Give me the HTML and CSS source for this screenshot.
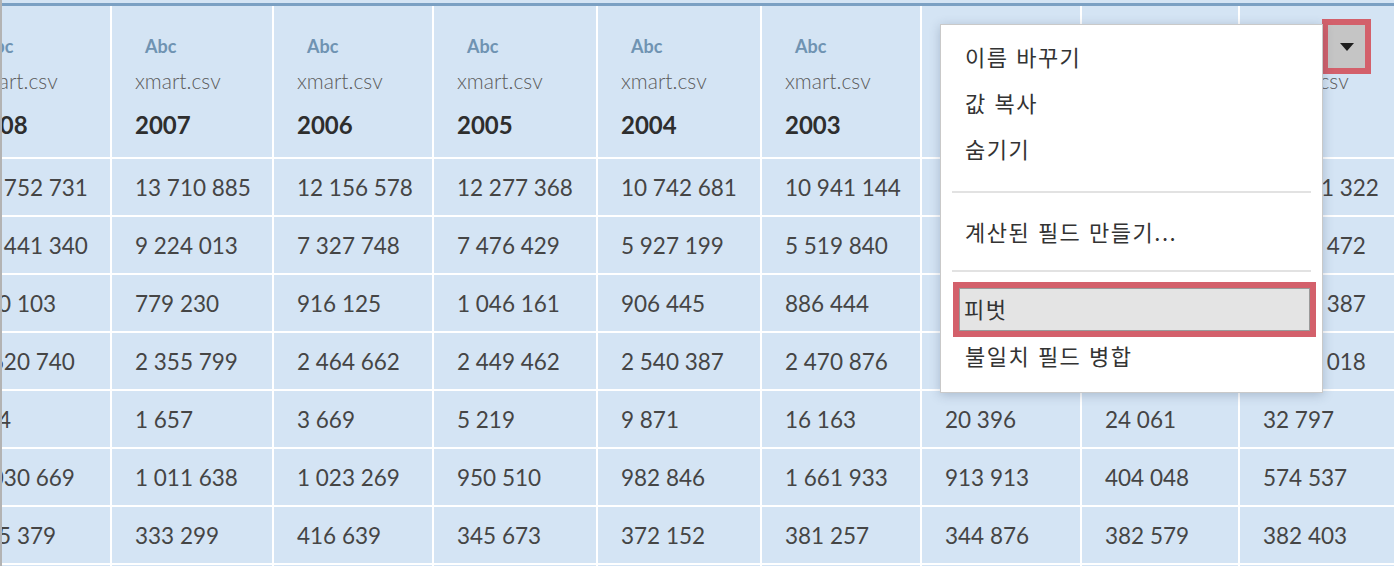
FILE: index.html
```html
<!DOCTYPE html>
<html lang="ko">
<head>
<meta charset="utf-8">
<title>xmart.csv</title>
<link rel="stylesheet" href="styles.css">
</head>
<body>
<div class="viewport">
  <div class="grid">
    <div class="hcell"><span class="type">Abc</span><span class="src">xmart.csv</span><span class="year">2008</span></div>
    <div class="hcell"><span class="type">Abc</span><span class="src">xmart.csv</span><span class="year">2007</span></div>
    <div class="hcell"><span class="type">Abc</span><span class="src">xmart.csv</span><span class="year">2006</span></div>
    <div class="hcell"><span class="type">Abc</span><span class="src">xmart.csv</span><span class="year">2005</span></div>
    <div class="hcell"><span class="type">Abc</span><span class="src">xmart.csv</span><span class="year">2004</span></div>
    <div class="hcell"><span class="type">Abc</span><span class="src">xmart.csv</span><span class="year">2003</span></div>
    <div class="hcell"><span class="type">Abc</span><span class="src">xmart.csv</span><span class="year">2002</span></div>
    <div class="hcell"><span class="type">Abc</span><span class="src">xmart.csv</span><span class="year">2001</span></div>
    <div class="hcell"><span class="type">Abc</span><span class="src">xmart.csv</span><span class="year">2000</span></div>

    <div class="cell">13 752 731</div><div class="cell">13 710 885</div><div class="cell">12 156 578</div><div class="cell">12 277 368</div><div class="cell">10 742 681</div><div class="cell">10 941 144</div><div class="cell">10 528 614</div><div class="cell">10 331 207</div><div class="cell">10 961 322</div>
    <div class="cell">10 441 340</div><div class="cell">9 224 013</div><div class="cell">7 327 748</div><div class="cell">7 476 429</div><div class="cell">5 927 199</div><div class="cell">5 519 840</div><div class="cell">5 337 915</div><div class="cell">5 102 763</div><div class="cell">5 330 472</div>
    <div class="cell">860 103</div><div class="cell">779 230</div><div class="cell">916 125</div><div class="cell">1 046 161</div><div class="cell">906 445</div><div class="cell">886 444</div><div class="cell">858 023</div><div class="cell">841 290</div><div class="cell">1 039 387</div>
    <div class="cell">2 620 740</div><div class="cell">2 355 799</div><div class="cell">2 464 662</div><div class="cell">2 449 462</div><div class="cell">2 540 387</div><div class="cell">2 470 876</div><div class="cell">2 301 552</div><div class="cell">2 288 645</div><div class="cell">2 617 018</div>
    <div class="cell">634</div><div class="cell">1 657</div><div class="cell">3 669</div><div class="cell">5 219</div><div class="cell">9 871</div><div class="cell">16 163</div><div class="cell">20 396</div><div class="cell">24 061</div><div class="cell">32 797</div>
    <div class="cell">1 030 669</div><div class="cell">1 011 638</div><div class="cell">1 023 269</div><div class="cell">950 510</div><div class="cell">982 846</div><div class="cell">1 661 933</div><div class="cell">913 913</div><div class="cell">404 048</div><div class="cell">574 537</div>
    <div class="cell">345 379</div><div class="cell">333 299</div><div class="cell">416 639</div><div class="cell">345 673</div><div class="cell">372 152</div><div class="cell">381 257</div><div class="cell">344 876</div><div class="cell">382 579</div><div class="cell">382 403</div>
    <div class="cell"></div><div class="cell"></div><div class="cell"></div><div class="cell"></div><div class="cell"></div><div class="cell"></div><div class="cell"></div><div class="cell"></div><div class="cell"></div>
  </div>
</div>

<div class="dropdown"><span class="caret"></span></div>

<div class="menu">
  <div class="item">이름 바꾸기</div>
  <div class="item">값 복사</div>
  <div class="item">숨기기</div>
  <div class="sep sep-a"></div>
  <div class="item">계산된 필드 만들기...</div>
  <div class="sep sep-b"></div>
  <div class="item item-hl">피벗</div>
  <div class="item item-last">불일치 필드 병합</div>
</div>
</body>
</html>
```

FILE: styles.css
```css
html, body {
  margin: 0;
  padding: 0;
}

body {
  background: #d4e4f4;
  font-family: Lato, "Noto Sans", sans-serif;
  width: 1394px;
  height: 566px;
  overflow: hidden;
  position: relative;
}

.viewport {
  height: 566px;
  box-sizing: border-box;
  border-left: 2px solid #b3b3b3;
  padding-top: 3px;
  overflow: hidden;
}

.grid {
  display: grid;
  grid-template-columns: 161px 160px 158px 162px 162px 158px 158px 156px 220px;
  grid-template-rows: 151px;
  grid-auto-rows: 56px;
  gap: 2px;
  margin-left: -53px;
  background: #ffffff;
  border-top: 3px solid #7ba0c3;
}

.hcell {
  background: #d4e4f4;
  display: flex;
  flex-direction: column;
  align-items: flex-start;
  padding-left: 23px;
  box-sizing: border-box;
  white-space: nowrap;
}

.type {
  margin-top: 30px;
  margin-left: 10px;
  height: 20px;
  line-height: 20px;
  font-size: 18px;
  font-weight: 700;
  color: #6f93b2;
}

.src {
  margin-top: 13px;
  height: 24px;
  line-height: 24px;
  font-size: 21px;
  font-weight: 300;
  color: #5c5c5c;
}

.year {
  margin-top: 17px;
  height: 30px;
  line-height: 30px;
  font-size: 24px;
  font-weight: 700;
  color: #2e2e2e;
}

.cell {
  background: #d4e4f4;
  display: flex;
  align-items: center;
  padding-left: 23px;
  font-size: 22.5px;
  color: #454545;
  white-space: nowrap;
}

.dropdown {
  position: absolute;
  left: 1322px;
  top: 19px;
  width: 49px;
  height: 55px;
  box-sizing: border-box;
  border: 6px solid #d3606b;
  background: #c5c5c5;
  display: flex;
  align-items: center;
  justify-content: center;
}

.caret {
  width: 0;
  height: 0;
  border-left: 7px solid transparent;
  border-right: 7px solid transparent;
  border-top: 8px solid #1e1e1e;
}

.menu {
  position: absolute;
  left: 940px;
  top: 24px;
  width: 383px;
  box-sizing: border-box;
  background: #ffffff;
  border: 1px solid #c9c9c9;
  box-shadow: 0 2px 10px rgba(40, 60, 90, 0.25);
  padding: 8px 0 19px;
  font-family: "Noto Sans CJK KR", "Noto Sans", sans-serif;
  font-size: 22px;
  letter-spacing: 1.5px;
  color: #333333;
}

.item {
  height: 46px;
  line-height: 46px;
  padding-left: 24px;
  white-space: nowrap;
}

.sep {
  height: 2px;
  background: #e2e2e2;
  margin: 0 11px;
}

.sep-a {
  margin-top: 20px;
  margin-bottom: 15px;
}

.sep-b {
  margin-top: 16px;
  margin-bottom: 10px;
}

.item-hl {
  height: 55px;
  line-height: 41px;
  box-sizing: border-box;
  margin: 0 6px 0 12px;
  padding-left: 5px;
  border: 6px solid #d3606b;
  background: #e4e4e4;
  box-shadow: inset 0 0 0 1px #9a9a9a;
}

.item-last {
  height: 36px;
  line-height: 36px;
}
```
